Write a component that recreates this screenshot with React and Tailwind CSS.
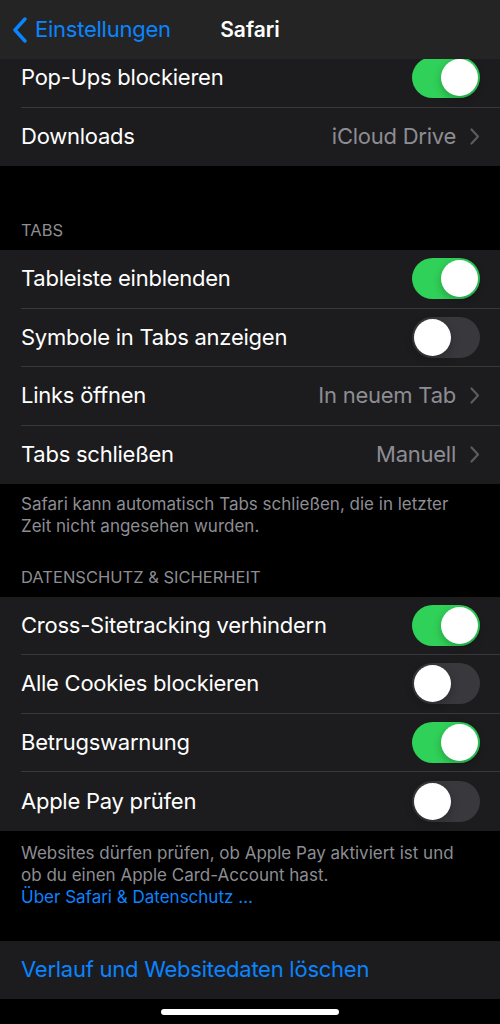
import React from 'react'

const font = { fontFamily: 'Inter, "Noto Sans", sans-serif' }

const Toggle = ({ on }) => (
    <div className={`relative w-[68px] h-[41px] rounded-full shrink-0 ${on ? 'bg-[#30d158]' : 'bg-[#39393d]'}`}>
        <div className={`absolute top-[2px] w-[37px] h-[37px] rounded-full bg-white shadow-[0_3px_8px_rgba(0,0,0,0.25)] ${on ? 'right-[2px]' : 'left-[2px]'}`} />
    </div>
)

const Chevron = () => (
    <svg width="10" height="17" viewBox="0 0 10 17" className="ml-[14px] shrink-0">
        <path d="M1.5 1.5 L8 8.5 L1.5 15.5" fill="none" stroke="#5b5b60" strokeWidth="2.2" strokeLinecap="round" strokeLinejoin="round" />
    </svg>
)

const Row = ({ label, toggle, value, last }) => (
    <div className="flex items-center pl-[21px] h-[58.5px]">
        <div className={`flex items-center flex-1 h-full pr-[20px] ${last ? '' : 'border-b border-[#38383a]'}`}>
            <span className="flex-1 text-[22px] text-white tracking-[-0.25px]">{label}</span>
            {toggle !== undefined && <Toggle on={toggle} />}
            {value && (
                <>
                    <span className="text-[22px] text-[#8d8d93] tracking-[-0.25px]">{value}</span>
                    <Chevron />
                </>
            )}
        </div>
    </div>
)

const Header = ({ children }) => (
    <div className="px-[21px] pb-[8px] text-[16.5px] leading-[23px] text-[#8d8d93] uppercase">{children}</div>
)

export default function App() {
    return (
        <div className="w-[500px] h-[1024px] bg-black overflow-hidden flex flex-col" style={font}>
            <div className="relative z-10 h-[59px] bg-[#242424] flex items-center shrink-0">
                <div className="flex items-center pl-[12px]">
                    <svg width="16" height="26" viewBox="0 0 16 26">
                        <path d="M13 2 L3 13 L13 24" fill="none" stroke="#0a84ff" strokeWidth="3.4" strokeLinecap="round" strokeLinejoin="round" />
                    </svg>
                    <span className="ml-[7px] text-[22px] text-[#0a84ff] tracking-[-0.25px]">Einstellungen</span>
                </div>
                <span className="absolute left-1/2 -translate-x-1/2 text-[21px] font-semibold text-white">Safari</span>
            </div>

            <div className="-mt-[10px] flex flex-col">
                <div className="bg-[#1c1c1e]">
                    <Row label="Pop-Ups blockieren" toggle={true} />
                    <Row label="Downloads" value="iCloud Drive" last />
                </div>

                <div className="h-[53px]" />
                <Header>Tabs</Header>
                <div className="bg-[#1c1c1e]">
                    <Row label="Tableiste einblenden" toggle={true} />
                    <Row label="Symbole in Tabs anzeigen" toggle={false} />
                    <Row label="Links öffnen" value="In neuem Tab" />
                    <Row label="Tabs schließen" value="Manuell" last />
                </div>
                <div className="pl-[21px] pr-[36px] pt-[9px] text-[17px] leading-[22px] text-[#8d8d93]">
                    Safari kann automatisch Tabs schließen, die in letzter Zeit nicht angesehen wurden.
                </div>

                <div className="h-[28.5px]" />
                <Header>Datenschutz &amp; Sicherheit</Header>
                <div className="bg-[#1c1c1e]">
                    <Row label="Cross-Sitetracking verhindern" toggle={true} />
                    <Row label="Alle Cookies blockieren" toggle={false} />
                    <Row label="Betrugswarnung" toggle={true} />
                    <Row label="Apple Pay prüfen" toggle={false} last />
                </div>
                <div className="pl-[21px] pr-[36px] pt-[11px] text-[17px] leading-[22px] text-[#8d8d93]">
                    Websites dürfen prüfen, ob Apple Pay aktiviert ist und ob du einen Apple Card-Account hast.
                    <div className="text-[#0a84ff]">Über Safari &amp; Datenschutz …</div>
                </div>

                <div className="h-[33px]" />
                <div className="bg-[#1c1c1e] h-[58.5px] flex items-center px-[21px]">
                    <span className="text-[22px] text-[#0a84ff] tracking-[-0.25px]">Verlauf und Websitedaten löschen</span>
                </div>
            </div>

            <div className="flex-1 flex items-start justify-center pt-[10px]">
                <div className="w-[178px] h-[6px] rounded-full bg-white" />
            </div>
        </div>
    )
}
